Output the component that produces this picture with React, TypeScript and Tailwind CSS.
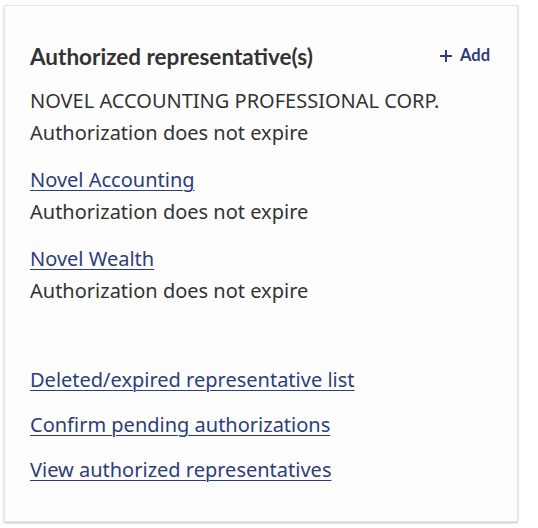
const reps = [
  { name: 'NOVEL ACCOUNTING PROFESSIONAL CORP.', link: false },
  { name: 'Novel Accounting', link: true },
  { name: 'Novel Wealth', link: true },
];

const links = [
  'Deleted/expired representative list',
  'Confirm pending authorizations',
  'View authorized representatives',
];

export default function App() {
  return (
    <div className="min-h-[528px] w-[538px] bg-white pt-[5px] pl-[4px]">
      <section className="w-[514px] h-[517px] border border-[#e6e6e6] bg-[#fdfdfd] shadow-[0_1px_2px_rgba(0,0,0,0.25)] px-[25px] pt-[29px] font-['Noto_Sans',sans-serif] text-[20px] text-[#333]">
        <div className="flex items-center justify-between h-[44px]">
          <h2 className="font-['Lato',sans-serif] font-bold text-[22.5px] text-[#333] leading-[28px]">
            Authorized representative(s)
          </h2>
          <button className="flex items-center gap-[8px] mr-[2px] -mt-[3px] text-[#2c3d7a] font-['Lato',sans-serif] font-bold text-[16.5px] leading-none">
            <svg width="12" height="12" viewBox="0 0 12 12" fill="none" stroke="currentColor" strokeWidth="2">
              <path d="M6 0v12M0 6h12" />
            </svg>
            Add
          </button>
        </div>

        <div className="mt-[6px] flex flex-col gap-[15px]">
          {reps.map(r => (
            <div key={r.name} className="leading-[32px]">
              {r.link ? (
                <a href="#" className="text-[#2c3d7a] underline underline-offset-[3px] decoration-1">{r.name}</a>
              ) : (
                <p>{r.name}</p>
              )}
              <p>Authorization does not expire</p>
            </div>
          ))}
        </div>

        <div className="mt-[57px] flex flex-col gap-[13px] leading-[32px]">
          {links.map(l => (
            <a key={l} href="#" className="text-[#2c3d7a] underline underline-offset-[3px] decoration-1 w-fit">{l}</a>
          ))}
        </div>
      </section>
    </div>
  );
}
